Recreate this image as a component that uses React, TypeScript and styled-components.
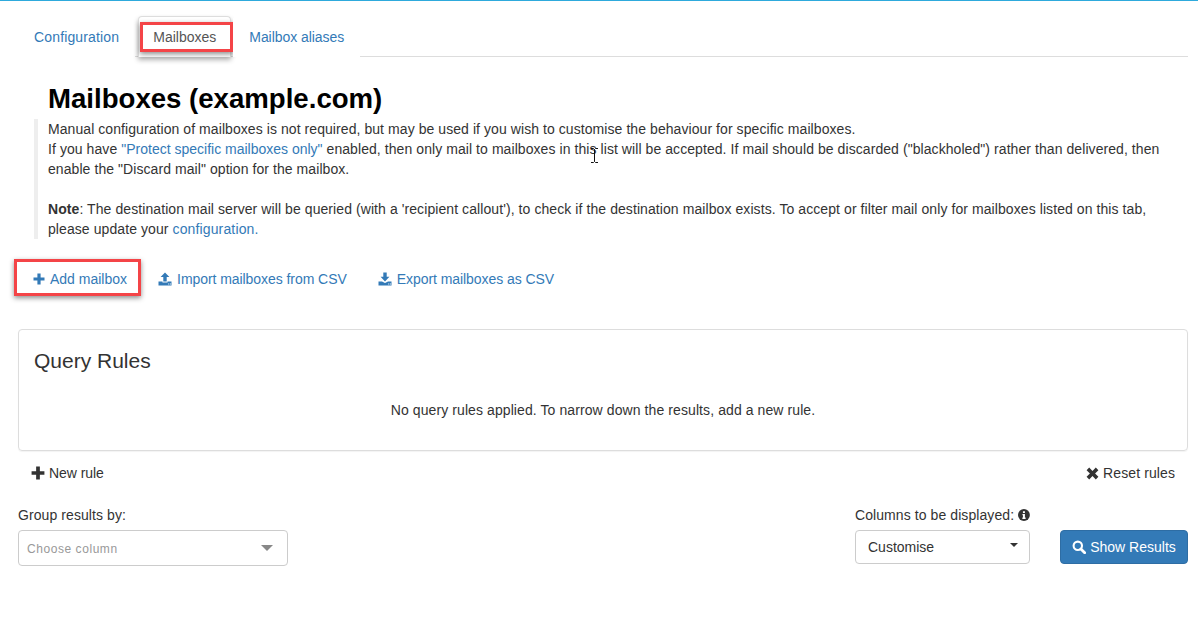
import React from "react";
import styled, { createGlobalStyle } from "styled-components";

const GlobalStyle = createGlobalStyle`
  html, body {
    margin: 0;
    padding: 0;
    background: #fff;
  }
  body {
    font-family: "Liberation Sans", Arial, sans-serif;
    font-size: 14px;
    line-height: 20px;
    color: #333;
  }
  * {
    box-sizing: border-box;
  }
`;

const PlusIcon = ({ size = 12 }: { size?: number }) => (
  <svg width={size} height={size} viewBox="0 0 12 12" fill="currentColor">
    <path d="M4.4 0.5h3.2v3.9h3.9v3.2H7.6v3.9H4.4V7.6H0.5V4.4h3.9z" />
  </svg>
);

const UploadIcon = () => (
  <svg width="14" height="14" viewBox="0 0 14 14" fill="currentColor">
    <path d="M7 0.5L11.4 5H8.7v4.5H5.3V5H2.6z" />
    <path d="M0.5 9.5H4.5v1h5v-1h4V13.5H0.5zM10.2 11.4h1v1h-1zM11.9 11.4h1v1h-1z" fillRule="evenodd" />
  </svg>
);

const DownloadIcon = () => (
  <svg width="14" height="14" viewBox="0 0 14 14" fill="currentColor">
    <path d="M5.3 0.5h3.4v4.3h2.7L7 9.6 2.6 4.8h2.700z" />
    <path d="M0.5 9.5H4L7 11l3-1.500h3.500V13.500H0.500zM10.2 11.4h1v1h-1zM11.9 11.4h1v1h-1z" fillRule="evenodd" />
  </svg>
);

const RemoveIcon = () => (
  <svg width="13" height="13" viewBox="0 0 13 13" fill="currentColor">
    <path d="M3.2 0.6L6.5 3.9 9.8 0.6l2.6 2.6L9.1 6.5l3.3 3.3-2.6 2.6-3.3-3.3-3.3 3.3-2.6-2.6 3.3-3.3L0.6 3.2z" />
  </svg>
);

const SearchIcon = () => (
  <svg width="14" height="14" viewBox="0 0 14 14" fill="none" stroke="currentColor">
    <circle cx="5.8" cy="5.8" r="4.2" strokeWidth="2.1" />
    <path d="M8.9 8.9l3.8 3.8" strokeWidth="2.8" strokeLinecap="round" />
  </svg>
);

const InfoIcon = () => (
  <svg width="12" height="12" viewBox="0 0 12 12">
    <circle cx="6" cy="6" r="6" fill="#333" />
    <path d="M5 2.2h2v1.7H5zM4.5 5h2.5v3.6h.7V10H4.4V8.6H5V6.3h-.5z" fill="#fff" />
  </svg>
);

const Page = styled.div`
  width: 1198px;
  height: 626px;
  border-top: 1px solid #2eaadc;
  padding: 0 10px 0 18px;
  overflow: hidden;
`;

const Tabs = styled.nav`
  display: flex;
  height: 56px;
  padding-top: 15px;
  border-bottom: 1px solid #ddd;
`;

const Tab = styled.a<{ $active?: boolean; $spacing?: number; $gap?: number }>`
  display: block;
  height: 41px;
  padding: 10px ${(p) => (p.$active ? 14 : 15)}px 0;
  margin-right: ${(p) => p.$gap ?? 2}px;
  border: 1px solid ${(p) => (p.$active ? "#ddd" : "transparent")};
  border-bottom: 0;
  border-radius: 4px 4px 0 0;
  letter-spacing: ${(p) => p.$spacing ?? 0}px;
  color: ${(p) => (p.$active ? "#555" : "#337ab7")};
  background: #fff;
  box-shadow: ${(p) => (p.$active ? "0 3px 5px rgba(0,0,0,0.3)" : "none")};
  position: relative;
`;

const Highlight = styled.span<{ $top: number; $left: number; $w: number; $h: number }>`
  position: absolute;
  top: ${(p) => p.$top}px;
  left: ${(p) => p.$left}px;
  width: ${(p) => p.$w}px;
  height: ${(p) => p.$h}px;
  border: 3px solid #f44447;
  box-shadow: 0 2px 5px rgba(0, 0, 0, 0.45);
  pointer-events: none;
`;

const Intro = styled.section`
  padding: 0 0 0 16px;
  margin-top: 27px;
`;

const Title = styled.h1`
  margin: 0 0 0 14px;
  font-size: 27.6px;
  line-height: 30px;
  font-weight: 700;
  color: #000;
`;

const Quote = styled.blockquote`
  position: relative;
  margin: 5px 0 0;
  padding: 0 0 0 10px;
  border-left: 4px solid #eee;
  width: 1130px;
  height: 120px;
  letter-spacing: 0.07px;
`;

const NoteText = styled.span`
  letter-spacing: 0.08px;
`;

const Link = styled.a<{ $spacing: number }>`
  color: #337ab7;
  letter-spacing: ${(p) => p.$spacing}px;
`;

const Cursor = styled.svg`
  position: absolute;
  left: 552px;
  top: 29px;
`;

const Actions = styled.div`
  display: flex;
  align-items: center;
  height: 20px;
  margin-top: 30px;
  padding-left: 15px;
  gap: 31px;
`;

const Action = styled.a<{ $spacing?: number }>`
  position: relative;
  display: inline-flex;
  align-items: center;
  gap: 5px;
  letter-spacing: ${(p) => p.$spacing ?? 0}px;
  color: #337ab7;
`;

const Panel = styled.section`
  margin-top: 40px;
  height: 122px;
  border: 1px solid #ddd;
  border-radius: 4px;
  box-shadow: 0 1px 1px rgba(0, 0, 0, 0.05);
  padding: 15px;
`;

const PanelTitle = styled.h3`
  margin: 3px 0 0;
  font-size: 21px;
  line-height: 26px;
  font-weight: 400;
`;

const PanelNote = styled.p`
  margin: 26px 0 0;
  text-align: center;
  letter-spacing: 0.09px;
`;

const RuleBar = styled.div`
  display: flex;
  justify-content: space-between;
  margin-top: 12px;
  padding: 0 13px;
`;

const RuleButton = styled.span<{ $gap: number; $spacing: number }>`
  display: inline-flex;
  align-items: center;
  gap: ${(p) => p.$gap}px;
  letter-spacing: ${(p) => p.$spacing}px;
`;

const Filters = styled.div`
  display: flex;
  align-items: flex-start;
  margin-top: 22px;
`;

const Field = styled.div<{ $w: number }>`
  width: ${(p) => p.$w}px;
`;

const FieldLabel = styled.label`
  display: flex;
  align-items: center;
  gap: 4px;
  height: 20px;
  margin-bottom: 5px;
  white-space: nowrap;
  letter-spacing: 0.08px;
`;

const Select = styled.div<{ $h: number; $pad: number }>`
  display: flex;
  align-items: center;
  justify-content: space-between;
  height: ${(p) => p.$h}px;
  padding: 0 ${(p) => p.$pad}px;
  border: 1px solid #ccc;
  border-radius: 4px;
  background: #fff;
`;

const Placeholder = styled.span`
  padding-top: 1px;
  font-size: 12px;
  letter-spacing: 0.56px;
  color: #999;
`;

const Caret = styled.span<{ $w: number; $color: string; $top: number; $right: number }>`
  width: 0;
  height: 0;
  margin-top: ${(p) => p.$top}px;
  margin-right: ${(p) => p.$right}px;
  border-left: ${(p) => p.$w}px solid transparent;
  border-right: ${(p) => p.$w}px solid transparent;
  border-top: ${(p) => p.$w}px solid ${(p) => p.$color};
`;

const Spacer = styled.div`
  flex: 1;
`;

const ShowButton = styled.button`
  display: inline-flex;
  align-items: center;
  justify-content: center;
  gap: 4px;
  width: 128px;
  height: 34px;
  margin-top: 25px;
  margin-left: 30px;
  border: 1px solid #2e6da4;
  border-radius: 4px;
  background: #337ab7;
  color: #fff;
  font: inherit;
`;

export default function App() {
  return (
    <>
      <GlobalStyle />
      <Page>
        <Tabs>
          <Tab $spacing={0.15} $gap={3}>Configuration</Tab>
          <Tab $active $gap={2}>
            Mailboxes
            <Highlight $top={5} $left={1} $w={93} $h={30} />
          </Tab>
          <Tab $spacing={-0.05}>Mailbox aliases</Tab>
        </Tabs>
        <Intro>
          <Title>Mailboxes (example.com)</Title>
          <Quote>
            Manual configuration of mailboxes is not required, but may be used if you wish to customise the behaviour for specific mailboxes.
            <br />
            If you have <Link $spacing={0}>"Protect specific mailboxes only"</Link> enabled, then only mail to mailboxes in this list will be accepted. If mail should be discarded ("blackholed") rather than delivered, then enable the "Discard mail" option for the mailbox.
            <br />
            <br />
            <NoteText>
              <b>Note</b>: The destination mail server will be queried (with a 'recipient callout'), to check if the destination mailbox exists. To accept or filter mail only for mailboxes listed on this tab, please update your <Link $spacing={0.14}>configuration.</Link>
            </NoteText>
            <Cursor width="9" height="15" viewBox="0 0 9 15" fill="none" stroke="#111">
              <path d="M1 .5h2.5L4.5 1.5 5.5.5H8M4.5 1.5v12M1 14.5h2.5l1-1 1 1H8" />
            </Cursor>
          </Quote>
        </Intro>
        <Actions>
          <Action>
            <PlusIcon />
            Add mailbox
            <Highlight $top={-10} $left={-19} $w={127} $h={37} />
          </Action>
          <Action $spacing={-0.06}>
            <UploadIcon />
            Import mailboxes from CSV
          </Action>
          <Action $spacing={-0.06}>
            <DownloadIcon />
            Export mailboxes as CSV
          </Action>
        </Actions>
        <Panel>
          <PanelTitle>Query Rules</PanelTitle>
          <PanelNote>No query rules applied. To narrow down the results, add a new rule.</PanelNote>
        </Panel>
        <RuleBar>
          <RuleButton $gap={4} $spacing={-0.05}>
            <PlusIcon size={14} />
            New rule
          </RuleButton>
          <RuleButton $gap={4} $spacing={0.1}>
            <RemoveIcon />
            Reset rules
          </RuleButton>
        </RuleBar>
        <Filters>
          <Field $w={270}>
            <FieldLabel>Group results by:</FieldLabel>
            <Select $h={36} $pad={8}>
              <Placeholder>Choose column</Placeholder>
              <Caret $w={6} $color="#888" $top={0} $right={6} />
            </Select>
          </Field>
          <Spacer />
          <Field $w={175}>
            <FieldLabel>
              Columns to be displayed: <InfoIcon />
            </FieldLabel>
            <Select $h={34} $pad={12}>
              Customise
              <Caret $w={4} $color="#333" $top={-4} $right={-1} />
            </Select>
          </Field>
          <ShowButton>
            <SearchIcon />
            Show Results
          </ShowButton>
        </Filters>
      </Page>
    </>
  );
}
